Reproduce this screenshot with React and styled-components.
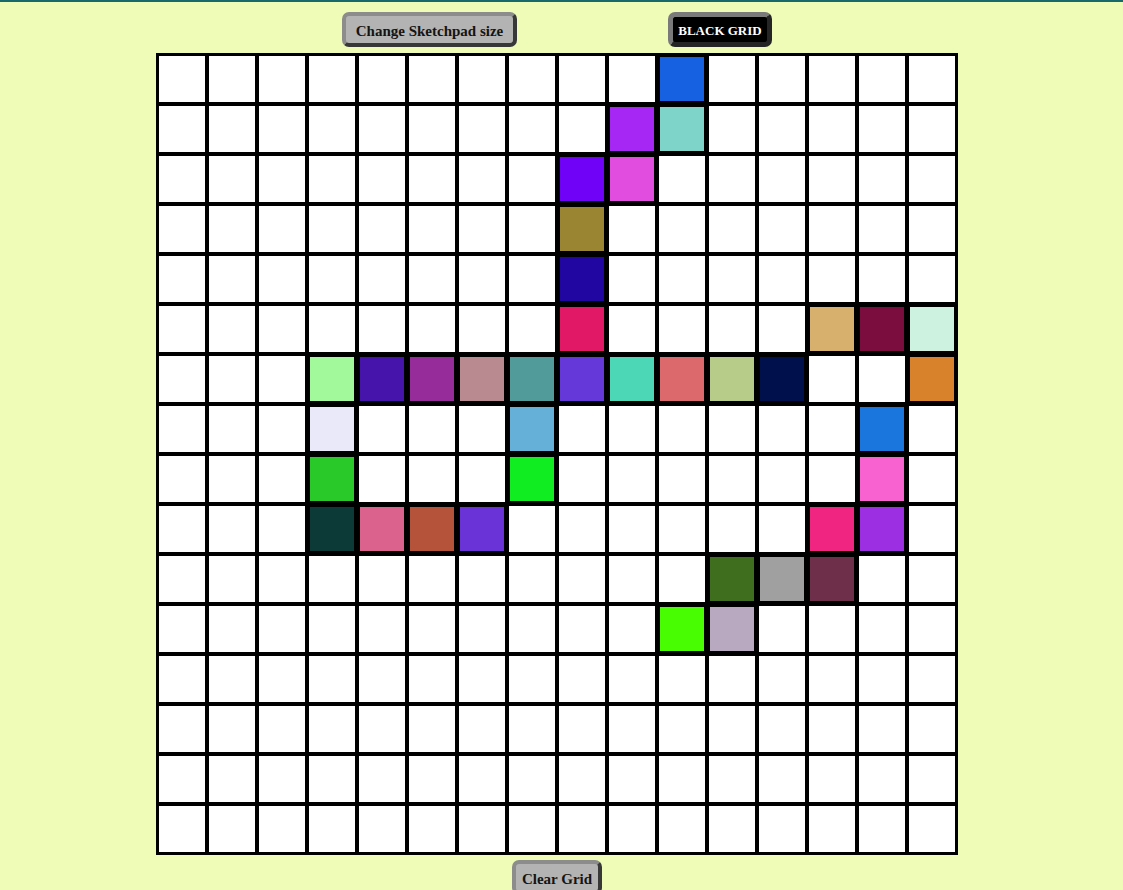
import React, { useState } from "react";
import styled, { createGlobalStyle } from "styled-components";

const GlobalStyle = createGlobalStyle`
  html, body {
    margin: 0;
    padding: 0;
    background: #effcb7;
  }
  body {
    border-top: 2px solid #17696b;
    font-family: "Liberation Serif", "DejaVu Serif", serif;
  }
`;

const Page = styled.div`
  width: 1114px;
  display: flex;
  flex-direction: column;
  align-items: center;
  padding-top: 10px;
`;

const Toolbar = styled.div`
  display: flex;
  align-items: center;
  gap: 151px;
`;

const Button = styled.button`
  box-sizing: border-box;
  width: ${(p) => p.$w}px;
  height: 35px;
  padding: 3px 0 0;
  border: ${(p) => (p.$dark ? 5 : 4)}px outset ${(p) => (p.$dark ? "#7a7a7a" : "#8c8c8c")};
  border-radius: 7px;
  background: ${(p) => (p.$dark ? "#000000" : "#b3b3b3")};
  color: ${(p) => (p.$dark ? "#ffffff" : "#141414")};
  font-family: "Liberation Serif", "DejaVu Serif", serif;
  font-weight: bold;
  font-size: ${(p) => (p.$dark ? 13 : 15)}px;
  white-space: nowrap;
  cursor: pointer;
`;

const Grid = styled.div`
  margin-top: 6px;
  display: grid;
  grid-template-columns: repeat(16, 50px);
  grid-auto-rows: 50px;
  border: 1px solid #000;
`;

const Cell = styled.div`
  box-sizing: border-box;
  border: ${(p) => (p.$color ? 3 : 2)}px solid #000;
  background: ${(p) => p.$color || "#ffffff"};
`;

const Footer = styled.div`
  margin-top: 5px;
  display: flex;
  justify-content: center;
`;

const painted = {
  "0,10": "#1660e2",
  "1,9": "#a626f4",
  "1,10": "#7fd4c9",
  "2,8": "#7002f8",
  "2,9": "#e04ddf",
  "3,8": "#9a8632",
  "4,8": "#2206a2",
  "5,8": "#e01866",
  "5,13": "#d6b06c",
  "5,14": "#7a0c3e",
  "5,15": "#cdf2df",
  "6,3": "#a2f99c",
  "6,4": "#4614aa",
  "6,5": "#962c9a",
  "6,6": "#b98a90",
  "6,7": "#519b9b",
  "6,8": "#6438d9",
  "6,9": "#4cd8b6",
  "6,10": "#dc696c",
  "6,11": "#b8cc8a",
  "6,12": "#00104d",
  "6,15": "#d8822b",
  "7,3": "#e9e9fa",
  "7,7": "#65b0d9",
  "7,14": "#1a75dc",
  "8,3": "#29c92a",
  "8,7": "#10ee22",
  "8,14": "#f861d0",
  "9,3": "#0b3a37",
  "9,4": "#da628c",
  "9,5": "#b4533a",
  "9,6": "#6a33d7",
  "9,13": "#f02481",
  "9,14": "#9b2fe1",
  "10,11": "#3f6e1e",
  "10,12": "#a0a0a0",
  "10,13": "#6e2f4b",
  "11,10": "#48fd01",
  "11,11": "#b8a9c0",
};

export default function App() {
  const [cells, setCells] = useState(painted);

  const cellList = [];
  for (let r = 0; r < 16; r++) {
    for (let c = 0; c < 16; c++) {
      const key = `${r},${c}`;
      cellList.push(<Cell key={key} $color={cells[key]} />);
    }
  }

  return (
    <>
      <GlobalStyle />
      <Page>
        <Toolbar>
          <Button $w={175}>Change Sketchpad size</Button>
          <Button $w={104} $dark>BLACK GRID</Button>
        </Toolbar>
        <Grid>{cellList}</Grid>
        <Footer>
          <Button $w={90} onClick={() => setCells({})}>Clear Grid</Button>
        </Footer>
      </Page>
    </>
  );
}
